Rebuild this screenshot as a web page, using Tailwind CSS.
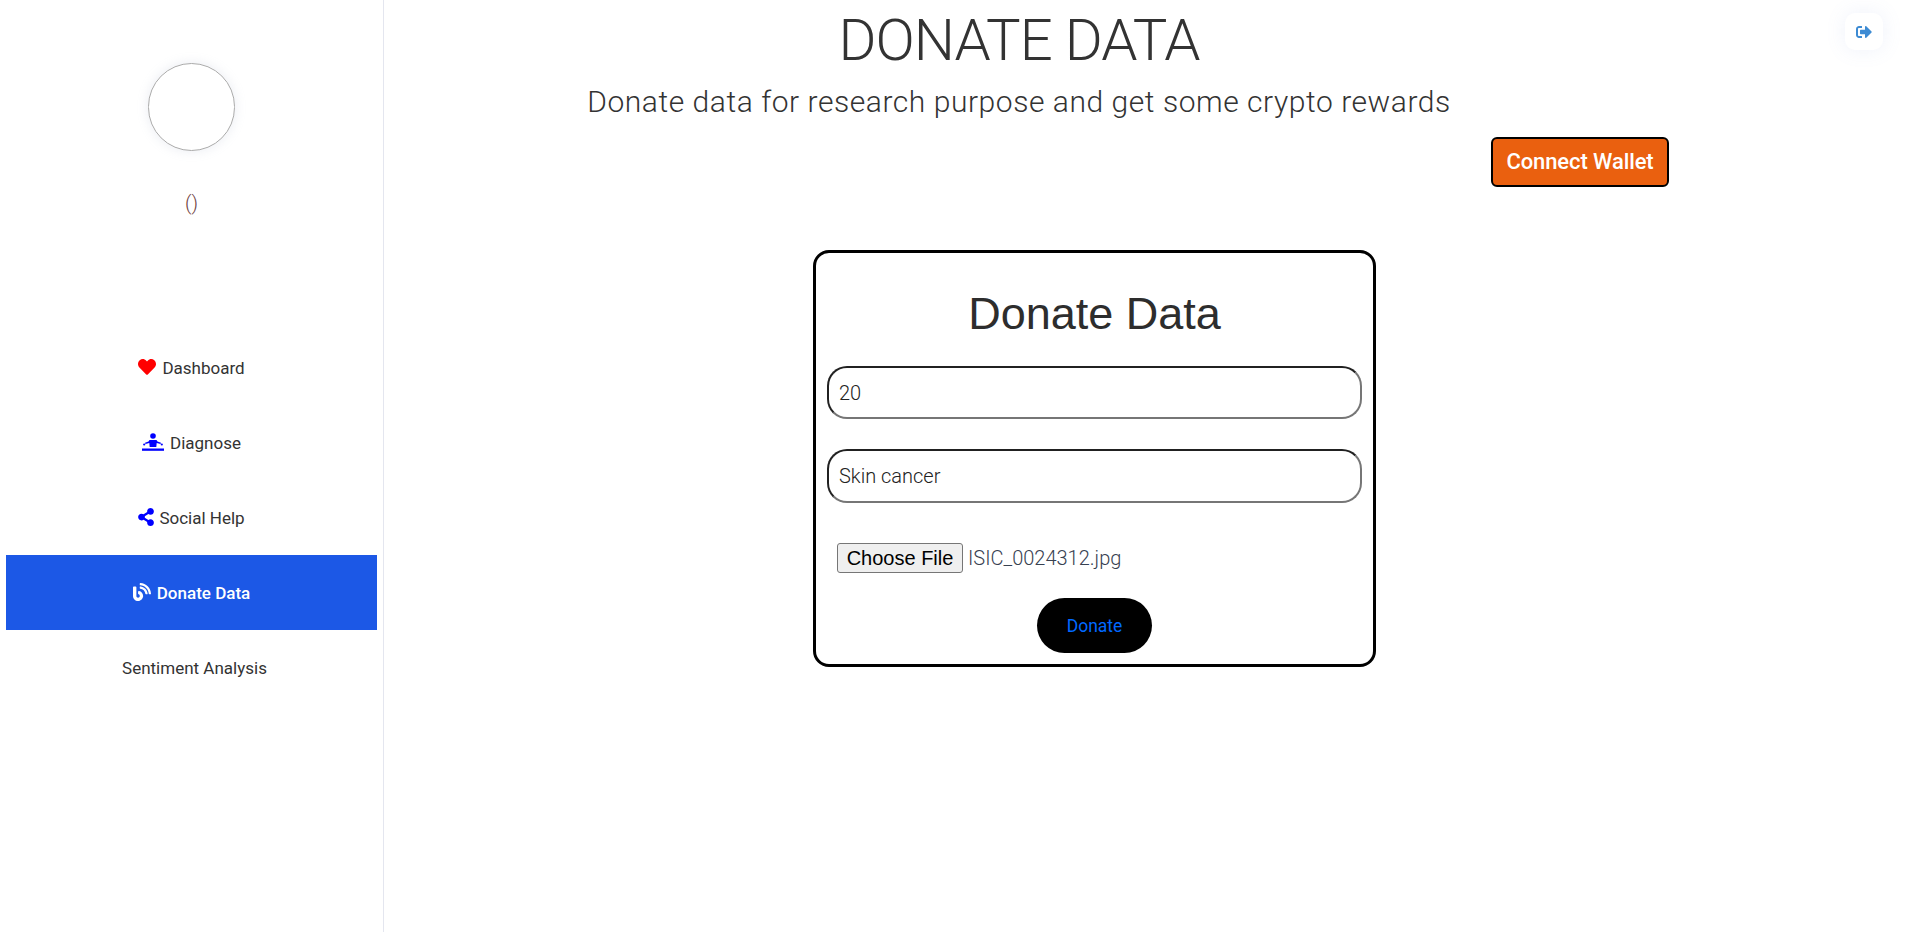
<!DOCTYPE html>
<html lang="en">

<head>
    <meta charset="UTF-8">
    <meta name="viewport" content="width=device-width, initial-scale=1.0">
    <title>Donate Data</title>
    <script src="https://cdn.jsdelivr.net/npm/@tailwindcss/browser@4"></script>
</head>

<body class="bg-white text-[#333] font-['Roboto',sans-serif]">
    <div class="flex h-[932px] overflow-hidden">
        <!-- Sidebar -->
        <aside class="w-[384px] shrink-0 border-r border-[#e4e6ef] pt-[63px] pl-[6px] pr-[6px]">
            <div class="flex flex-col items-center">
                <div class="w-[87px] h-[88px] rounded-full border border-[#aaa] shadow-[0_0_12px_rgba(150,160,190,0.2)] -ml-[1px]"></div>
                <p class="mt-[38px] text-[20px] leading-[28px] font-light text-[#6f3f3f]">()</p>
            </div>
            <nav class="mt-[113px] flex flex-col text-[17px] text-[#333]">
                <a class="h-[75px] flex items-center justify-center gap-[6px] pt-[2px]">
                    <svg class="w-[18px] h-[18px] text-[#ff0000] -mt-[4px]" viewBox="0 0 512 512" fill="currentColor"><path d="M462.3 62.6C407.5 15.9 326 24.3 275.7 76.2L256 96.5l-19.7-20.3C186.1 24.3 104.5 15.9 49.7 62.6c-62.8 53.6-66.1 149.8-9.9 207.9l193.5 199.8c12.5 12.9 32.8 12.9 45.3 0l193.5-199.8c56.3-58.1 53-154.3-9.8-207.9z"/></svg>
                    <span>Dashboard</span>
                </a>
                <a class="h-[75px] flex items-center justify-center gap-[6px] pt-[2px]">
                    <svg class="w-[22px] h-[18px] text-[#0000ff] -mt-[3px]" viewBox="0 0 22 18" fill="currentColor"><circle cx="11" cy="3" r="2.8"/><path d="M7.5 7h7l1 1.6 3.5 1.2-.5 1.3-3.8-1-.4 3.9H7.700l-.4-3.900-3.800 1-.5-1.300 3.500-1.200z"/><circle cx="2.200" cy="11.500" r="1.100"/><circle cx="19.800" cy="11.500" r="1.100"/><rect x="0" y="15.500" width="22" height="2.300"/></svg>
                    <span>Diagnose</span>
                </a>
                <a class="h-[75px] flex items-center justify-center gap-[5px] pt-[2px]">
                    <svg class="w-[16px] h-[18px] text-[#0000ff] -mt-[4px]" viewBox="0 0 448 512" fill="currentColor"><path d="M352 320c-22.608 0-43.387 7.819-59.79 20.895l-102.486-64.054a96.551 96.551 0 0 0 0-41.683l102.486-64.054C308.613 184.181 329.392 192 352 192c53.019 0 96-42.981 96-96S405.019 0 352 0s-96 42.981-96 96c0 7.158.79 14.13 2.276 20.841L155.79 180.895C139.387 167.819 118.608 160 96 160c-53.019 0-96 42.981-96 96s42.981 96 96 96c22.608 0 43.387-7.819 59.79-20.895l102.486 64.054A96.301 96.301 0 0 0 256 416c0 53.019 42.981 96 96 96s96-42.981 96-96-42.981-96-96-96z"/></svg>
                    <span>Social Help</span>
                </a>
                <a class="h-[75px] flex items-center justify-center gap-[6px] pt-[2px] bg-[#1c58e6] text-white font-medium">
                    <svg class="w-[18px] h-[18px] -mt-[4px]" viewBox="0 0 512 512" fill="currentColor"><path d="M172.2 226.8c-14.6-2.9-28.2 8.9-28.2 23.8V301c0 10.2 7.1 18.4 16.7 22 18.2 6.8 31.3 24.4 31.3 45 0 26.5-21.5 48-48 48s-48-21.500-48-48V120c0-13.300-10.700-24-24-24H24c-13.300 0-24 10.700-24 24v248c0 89.500 82.100 160.200 175 140.700 54.400-11.400 98.300-55.400 109.700-109.700 17.400-82.900-37-157.200-112.500-172.200zM209 0c-9.200-.5-17 6.800-17 16v31.600c0 8.500 6.600 15.500 15 15.900 129.400 7 233.400 112 240.900 241.500.5 8.400 7.500 15 15.900 15h32.100c9.200 0 16.500-7.800 16-17C503.400 139.800 372.200 8.600 209 0zm.3 96c-9.300-.7-17.300 6.700-17.300 16.100v32.100c0 8.400 6.500 15.300 14.800 15.900 76.800 6.300 138 68.200 144.900 145.200.8 8.300 7.600 14.700 15.900 14.700h32.200c9.300 0 16.800-8 16.100-17.300-8.400-110.100-96.500-198.200-206.600-206.600z"/></svg>
                    <span>Donate Data</span>
                </a>
                <a class="h-[75px] flex items-center justify-center pl-[6px] pt-[2px]">
                    <span>Sentiment Analysis</span>
                </a>
            </nav>
        </aside>

        <!-- Main -->
        <main class="relative flex-1">
            <button class="absolute top-[13px] left-[1461px] w-[38px] h-[37px] rounded-[10px] bg-white shadow-[0_0_20px_rgba(120,150,220,0.12)] flex items-center justify-center">
                <svg class="w-[18px] h-[16px] text-[#3d8bd3]" viewBox="0 0 512 512" fill="currentColor"><path d="M497 273L329 441c-15 15-41 4.500-41-17v-96H152c-13.300 0-24-10.700-24-24v-96c0-13.300 10.700-24 24-24h136V88c0-21.400 25.900-32 41-17l168 168c9.300 9.400 9.300 24.600 0 34zM192 436v-40c0-6.600-5.400-12-12-12H96c-17.700 0-32-14.300-32-32V160c0-17.700 14.300-32 32-32h84c6.600 0 12-5.400 12-12V76c0-6.600-5.400-12-12-12H96c-53 0-96 43-96 96v192c0 53 43 96 96 96h84c6.600 0 12-5.400 12-12z"/></svg>
            </button>

            <div class="w-[1270px] text-center">
                <h1 class="text-[58px] leading-[80px] tracking-[-1px] font-[350] text-[#333]">DONATE DATA</h1>
                <p class="pt-[1px] text-[30px] leading-[42px] tracking-[0.55px] font-light text-[#333]">Donate data for research purpose and get some crypto rewards</p>
                <div class="flex justify-end mt-[14px] -mr-[15px]">
                    <button class="w-[178px] h-[50px] pb-[2px] border-2 border-black rounded-[6px] bg-[#ea600f] text-white text-[22px] font-medium tracking-[-0.1px]">Connect Wallet</button>
                </div>
            </div>

            <!-- Form card -->
            <div class="ml-[429px] mt-[63px] w-[563px] h-[417px] border-[3px] border-black rounded-[16px] px-[11px] flex flex-col">
                <h2 class="mt-[35px] text-center text-[45px] leading-[52px] font-['Liberation_Sans',sans-serif] text-[#2d2d2d]">Donate Data</h2>
                <input type="text" value="20" class="mt-[26px] w-full h-[53px] rounded-[20px] border-2 [border-style:inset] border-[#767676] px-[10px] text-[20px] font-light text-[#222]">
                <input type="text" value="Skin cancer" class="mt-[30px] w-full h-[54px] rounded-[20px] border-2 [border-style:inset] border-[#767676] px-[10px] text-[20px] font-light text-[#222]">
                <div class="mt-[40px] ml-[10px] flex items-center gap-[5px]">
                    <button class="w-[126px] h-[30px] bg-[#efefef] border border-[#767676] rounded-[3px] text-[20px] leading-[24px] text-black font-['Liberation_Sans',sans-serif]">Choose File</button>
                    <span class="text-[20px] font-light text-[#374151]">ISIC_0024312.jpg</span>
                </div>
                <div class="mt-[25px] flex justify-center">
                    <button class="w-[115px] h-[55px] pt-[1px] rounded-full bg-black text-[#0069ff] text-[17.5px]">Donate</button>
                </div>
            </div>
        </main>
    </div>
</body>

</html>
